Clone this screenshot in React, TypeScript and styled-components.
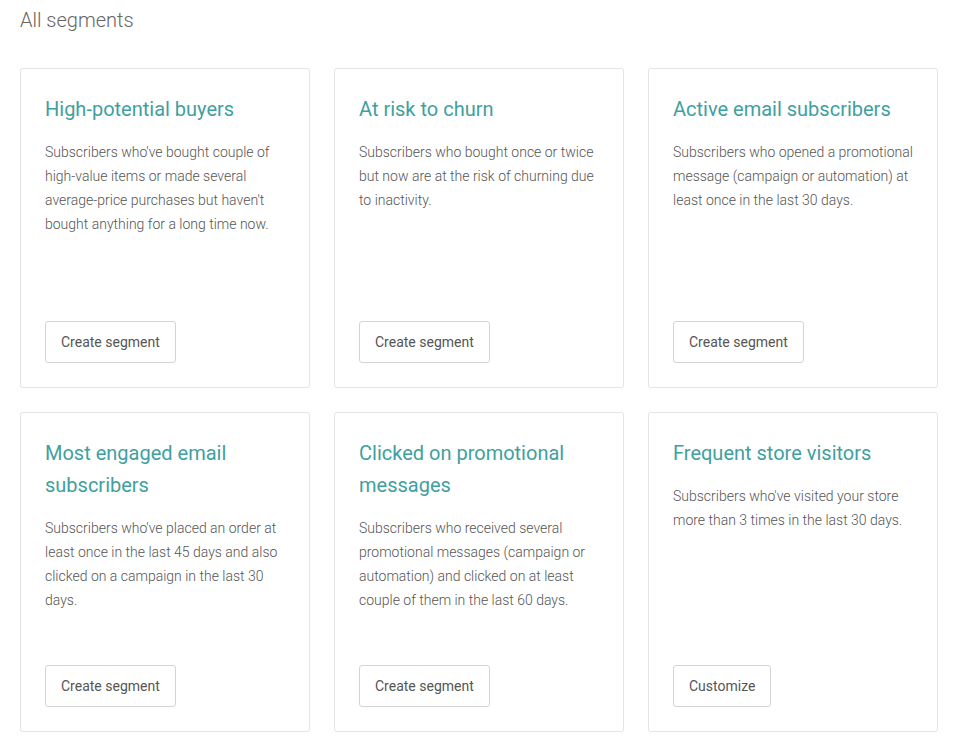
import React from 'react';
import styled, { createGlobalStyle } from 'styled-components';

const GlobalStyle = createGlobalStyle`
  html, body {
    margin: 0;
    padding: 0;
    background: #ffffff;
  }
  body {
    font-family: Roboto, "Liberation Sans", Arial, sans-serif;
    -webkit-font-smoothing: antialiased;
  }
`;

const Page = styled.main`
  padding: 4px 20px 20px 20px;
`;

const Heading = styled.h1`
  margin: 0 0 32px;
  font-size: 20px;
  line-height: 32px;
  font-weight: 300;
  color: #666666;
`;

const Grid = styled.section`
  display: grid;
  grid-template-columns: repeat(3, 290px);
  grid-auto-rows: 320px;
  gap: 24px;
`;

const Card = styled.article`
  display: flex;
  flex-direction: column;
  box-sizing: border-box;
  padding: 24px;
  border: 1px solid #e4e4e4;
  border-radius: 3px;
  background: #ffffff;
`;

const Title = styled.h2`
  margin: 0 0 15px;
  font-size: 20px;
  line-height: 32px;
  font-weight: 400;
  color: #40a09f;
`;

const Description = styled.p`
  margin: 0;
  font-size: 14px;
  line-height: 24px;
  font-weight: 300;
  color: #555555;
`;

const Button = styled.button`
  margin-top: auto;
  align-self: flex-start;
  height: 42px;
  padding: 0 15px;
  border: 1px solid #d4d4d4;
  border-radius: 3px;
  background: #ffffff;
  font-family: inherit;
  font-size: 14px;
  font-weight: 400;
  color: #555555;
  cursor: pointer;
`;

type Segment = {
  title: string;
  description: string;
  action: string;
};

const segments: Segment[] = [
  {
    title: 'High-potential buyers',
    description:
      "Subscribers who've bought couple of high-value items or made several average-price purchases but haven't bought anything for a long time now.",
    action: 'Create segment'
  },
  {
    title: 'At risk to churn',
    description:
      'Subscribers who bought once or twice but now are at the risk of churning due to inactivity.',
    action: 'Create segment'
  },
  {
    title: 'Active email subscribers',
    description:
      'Subscribers who opened a promotional message (campaign or automation) at least once in the last 30 days.',
    action: 'Create segment'
  },
  {
    title: 'Most engaged email subscribers',
    description:
      "Subscribers who've placed an order at least once in the last 45 days and also clicked on a campaign in the last 30 days.",
    action: 'Create segment'
  },
  {
    title: 'Clicked on promotional messages',
    description:
      'Subscribers who received several promotional messages (campaign or automation) and clicked on at least couple of them in the last 60 days.',
    action: 'Create segment'
  },
  {
    title: 'Frequent store visitors',
    description:
      "Subscribers who've visited your store more than 3 times in the last 30 days.",
    action: 'Customize'
  }
];

const App: React.FunctionComponent = () => {
  return (
    <React.Fragment>
      <GlobalStyle />
      <Page>
        <Heading>All segments</Heading>
        <Grid>
          {segments.map(segment => (
            <Card key={segment.title}>
              <Title>{segment.title}</Title>
              <Description>{segment.description}</Description>
              <Button type="button">{segment.action}</Button>
            </Card>
          ))}
        </Grid>
      </Page>
    </React.Fragment>
  );
};

export default App;
